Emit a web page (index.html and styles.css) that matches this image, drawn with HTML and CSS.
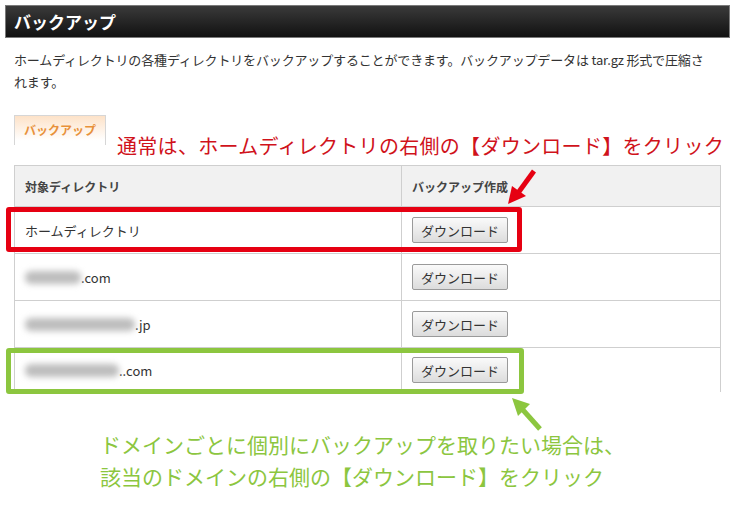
FILE: index.html
```html
<!DOCTYPE html>
<html lang="ja">
<head>
    <meta charset="UTF-8">
    <title>バックアップ</title>
    <link rel="stylesheet" href="styles.css">
</head>
<body>
    <div class="page">
        <h1 class="title">バックアップ</h1>
        <p class="desc">ホームディレクトリの各種ディレクトリをバックアップすることができます。バックアップデータは tar.gz 形式で圧縮さ<br>れます。</p>

        <div class="tabs"><span class="tab">バックアップ</span></div>

        <table class="dirs">
            <thead>
                <tr>
                    <th class="col-dir">対象ディレクトリ</th>
                    <th>バックアップ作成</th>
                </tr>
            </thead>
            <tbody>
                <tr>
                    <td>ホームディレクトリ</td>
                    <td><button class="btn">ダウンロード</button></td>
                </tr>
                <tr>
                    <td><span class="blur w1"></span>.com</td>
                    <td><button class="btn">ダウンロード</button></td>
                </tr>
                <tr>
                    <td><span class="blur w2"></span>.jp</td>
                    <td><button class="btn">ダウンロード</button></td>
                </tr>
                <tr class="last">
                    <td><span class="blur w3"></span>..com</td>
                    <td><button class="btn">ダウンロード</button></td>
                </tr>
            </tbody>
        </table>

        <!-- annotations -->
        <div class="note note-red">通常は、ホームディレクトリの右側の【ダウンロード】をクリック</div>
        <div class="frame frame-red"></div>
        <div class="frame frame-green"></div>
        <svg class="arrows" width="740" height="505" viewBox="0 0 740 505">
            <line x1="534" y1="171" x2="518" y2="193" stroke="#e60012" stroke-width="5"/>
            <polygon points="508,204 512,186 526,196" fill="#e60012"/>
            <line x1="540" y1="429" x2="523" y2="410" stroke="#8cc63f" stroke-width="5"/>
            <polygon points="512,398 530,404 518,416" fill="#8cc63f"/>
        </svg>
        <div class="note note-green">ドメインごとに個別にバックアップを取りたい場合は、<br>該当のドメインの右側の【ダウンロード】をクリック</div>
    </div>
</body>
</html>
```

FILE: styles.css
```css
body {
    margin: 0;
    background-color: #fff;
    font-family: "Noto Sans CJK JP", "DejaVu Sans", sans-serif;
    color: #333;
}
.page {
    position: relative;
    width: 740px;
    height: 505px;
    overflow: hidden;
}
.title {
    margin: 5px 10px 0 5px;
    height: 31px;
    padding-left: 8px;
    border: 1px solid #7a7a7a;
    background: linear-gradient(#3a3a3a, #111);
    color: #fff;
    font-size: 17px;
    font-weight: bold;
    line-height: 31px;
}
.desc {
    margin: 11px 0 0 14px;
    font-size: 13px;
    line-height: 22px;
    letter-spacing: -0.15px;
}
.tabs {
    margin: 22px 0 0 14px;
    height: 30px;
}
.tab {
    display: inline-block;
    width: 92px;
    height: 30px;
    box-sizing: border-box;
    border: 1px solid #d6d6d6;
    border-bottom: none;
    background: linear-gradient(#fde2c8, #fff 85%);
    color: #e8913a;
    font-size: 12px;
    font-weight: bold;
    line-height: 28px;
    text-align: center;
}

/* Table of directories */
.dirs {
    margin: 20px 0 0 14px;
    width: 707px;
    border-collapse: collapse;
    font-size: 13px;
}
.dirs th, .dirs td {
    border: 1px solid #cfcfcf;
    padding: 0 10px;
    text-align: left;
}
.dirs th {
    height: 40px;
    background-color: #f1f1f1;
    font-size: 12px;
    font-weight: bold;
    color: #444;
}
.dirs td {
    height: 46px;
}
.dirs .col-dir {
    width: 366px;
}
.dirs .last td {
    height: 44px;
    border-bottom: none;
}
.btn {
    width: 96px;
    height: 26px;
    padding: 0;
    border: 1px solid #9a9a9a;
    border-radius: 2px;
    background: linear-gradient(#fafafa, #dcdcdc);
    font-family: "Noto Sans CJK JP", sans-serif;
    font-size: 13px;
    color: #333;
}
.blur {
    display: inline-block;
    height: 13px;
    background-color: #bdbdbd;
    border-radius: 6px;
    filter: blur(3px);
    vertical-align: -1px;
}
.w1 { width: 56px; }
.w2 { width: 110px; }
.w3 { width: 94px; }

/* Annotations */
.note {
    position: absolute;
    white-space: nowrap;
}
.note-red {
    left: 117px;
    top: 131px;
    font-size: 20px;
    letter-spacing: 0.3px;
    line-height: 30px;
    color: #d0121b;
    background-color: #fff;
}
.note-green {
    left: 100px;
    top: 428px;
    font-size: 21px;
    line-height: 32px;
    color: #8cc63f;
}
.frame {
    position: absolute;
    box-sizing: border-box;
    border-radius: 3px;
}
.frame-red {
    left: 6px;
    top: 207px;
    width: 516px;
    height: 45px;
    border: 5px solid #e60012;
}
.frame-green {
    left: 6px;
    top: 348px;
    width: 518px;
    height: 46px;
    border: 5px solid #8cc63f;
}
.arrows {
    position: absolute;
    left: 0;
    top: 0;
}
```
